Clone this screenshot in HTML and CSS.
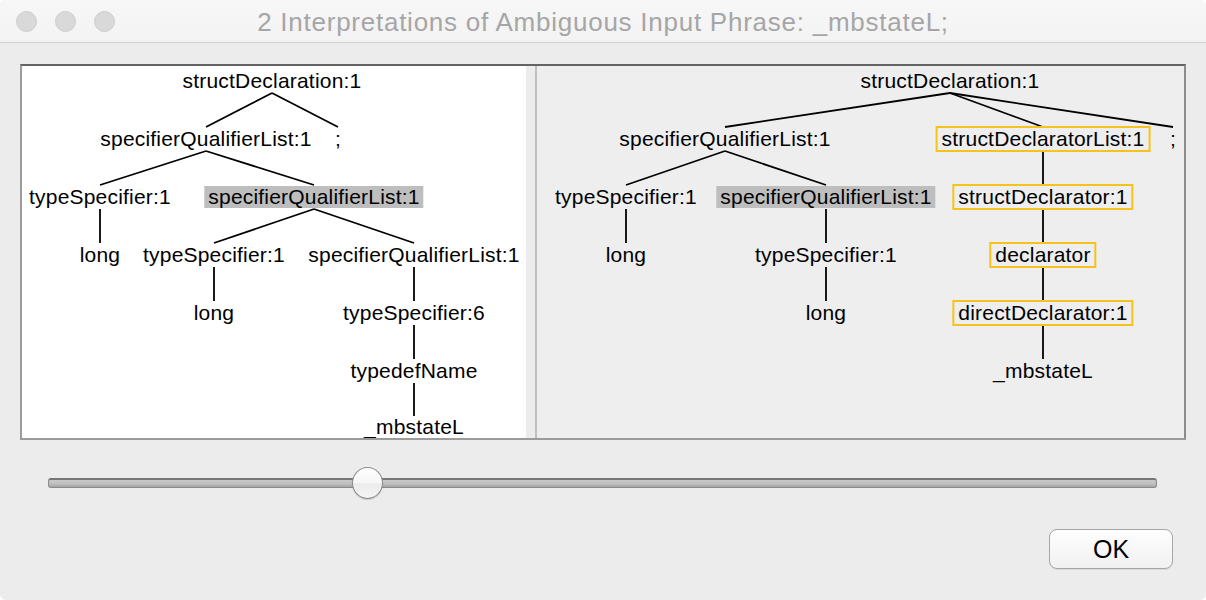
FILE: index.html
```html
<!DOCTYPE html>
<html lang="en">
<head>
    <meta charset="UTF-8">
    <title>2 Interpretations of Ambiguous Input Phrase</title>
    <link rel="stylesheet" href="styles.css">
</head>
<body>
    <div class="window">
        <div class="titlebar">
            <div class="lights">
                <span class="light"></span>
                <span class="light"></span>
                <span class="light"></span>
            </div>
            <div class="title">2 Interpretations of Ambiguous Input Phrase: _mbstateL;</div>
            <div></div>
        </div>

        <div class="content">
            <div class="panel">
                <!-- first interpretation -->
                <div class="tree tree-left">
                    <svg class="edges" viewBox="0 0 504 372" width="504" height="372">
                        <line x1="250" y1="27" x2="184" y2="61"/>
                        <line x1="250" y1="27" x2="316" y2="61"/>
                        <line x1="184" y1="85" x2="78" y2="119"/>
                        <line x1="184" y1="85" x2="292" y2="119"/>
                        <line x1="78" y1="143" x2="78" y2="177"/>
                        <line x1="292" y1="143" x2="192" y2="177"/>
                        <line x1="292" y1="143" x2="392" y2="177"/>
                        <line x1="192" y1="201" x2="192" y2="235"/>
                        <line x1="392" y1="201" x2="392" y2="235"/>
                        <line x1="392" y1="259" x2="392" y2="293"/>
                        <line x1="392" y1="317" x2="392" y2="350"/>
                    </svg>
                    <div class="node lv1" style="left:250px">structDeclaration:1</div>
                    <div class="node lv2" style="left:184px">specifierQualifierList:1</div>
                    <div class="node lv2" style="left:316px">;</div>
                    <div class="node lv3" style="left:78px">typeSpecifier:1</div>
                    <div class="node lv3 sel" style="left:292px">specifierQualifierList:1</div>
                    <div class="node lv4" style="left:78px">long</div>
                    <div class="node lv4" style="left:192px">typeSpecifier:1</div>
                    <div class="node lv4" style="left:392px">specifierQualifierList:1</div>
                    <div class="node lv5" style="left:192px">long</div>
                    <div class="node lv5" style="left:392px">typeSpecifier:6</div>
                    <div class="node lv6" style="left:392px">typedefName</div>
                    <div class="node lv7" style="left:392px">_mbstateL</div>
                </div>

                <div class="divider"></div>

                <!-- second interpretation -->
                <div class="tree tree-right">
                    <svg class="edges" viewBox="0 0 647 372" width="647" height="372">
                        <line x1="413" y1="27" x2="188" y2="61"/>
                        <line x1="413" y1="27" x2="506" y2="61"/>
                        <line x1="413" y1="27" x2="636" y2="61"/>
                        <line x1="188" y1="85" x2="89" y2="119"/>
                        <line x1="188" y1="85" x2="289" y2="119"/>
                        <line x1="506" y1="85" x2="506" y2="119"/>
                        <line x1="89" y1="143" x2="89" y2="177"/>
                        <line x1="289" y1="143" x2="289" y2="177"/>
                        <line x1="506" y1="143" x2="506" y2="177"/>
                        <line x1="289" y1="201" x2="289" y2="235"/>
                        <line x1="506" y1="201" x2="506" y2="235"/>
                        <line x1="506" y1="259" x2="506" y2="293"/>
                    </svg>
                    <div class="node lv1" style="left:413px">structDeclaration:1</div>
                    <div class="node lv2" style="left:188px">specifierQualifierList:1</div>
                    <div class="node lv2 mark" style="left:506px">structDeclaratorList:1</div>
                    <div class="node lv2" style="left:636px">;</div>
                    <div class="node lv3" style="left:89px">typeSpecifier:1</div>
                    <div class="node lv3 sel" style="left:289px">specifierQualifierList:1</div>
                    <div class="node lv3 mark" style="left:506px">structDeclarator:1</div>
                    <div class="node lv4" style="left:89px">long</div>
                    <div class="node lv4" style="left:289px">typeSpecifier:1</div>
                    <div class="node lv4 mark" style="left:506px">declarator</div>
                    <div class="node lv5" style="left:289px">long</div>
                    <div class="node lv5 mark" style="left:506px">directDeclarator:1</div>
                    <div class="node lv6" style="left:506px">_mbstateL</div>
                </div>
            </div>

            <div class="slider">
                <div class="track"></div>
                <div class="thumb"></div>
            </div>

            <div class="buttons">
                <button class="ok">OK</button>
            </div>
        </div>
    </div>
</body>
</html>
```

FILE: styles.css
```css
body {
    margin: 0;
    background: #ffffff;
    font-family: "Liberation Sans", Arial, sans-serif;
}

.window {
    width: 1206px;
    height: 600px;
    background: #ececec;
    border-radius: 6px;
    overflow: hidden;
    display: flex;
    flex-direction: column;
}

.titlebar {
    height: 42px;
    flex: none;
    display: grid;
    grid-template-columns: 1fr auto 1fr;
    align-items: center;
    background: linear-gradient(#f7f7f7, #f3f3f3);
    border-bottom: 1px solid #d0d0d0;
}

.lights {
    display: flex;
    gap: 18px;
    padding-left: 16px;
}

.light {
    width: 21px;
    height: 21px;
    border-radius: 50%;
    background: #d9d9d9;
    border: 1px solid #cdcdcd;
    box-sizing: border-box;
}

.title {
    font-size: 26px;
    letter-spacing: 0.75px;
    color: #a6a6a6;
    padding-top: 3px;
    white-space: nowrap;
}

.content {
    flex: 1;
    padding: 21px 20px 0;
}

.panel {
    height: 376px;
    box-sizing: border-box;
    display: flex;
    border: 2px solid #9b9b9b;
    border-top-color: #636363;
    border-right-color: #8c8c8c;
}

.tree {
    position: relative;
    overflow: hidden;
    font-size: 21px;
    letter-spacing: 0.2px;
    color: #000;
}

.tree-left {
    width: 504px;
    flex: none;
    background: #ffffff;
}

.divider {
    width: 9px;
    flex: none;
    background: #ececec;
}

.tree-right {
    flex: 1;
    background: #eeeeee;
    border-left: 2px solid #bfbfbf;
}

.edges {
    position: absolute;
    left: 0;
    top: 0;
}

.edges line {
    stroke: #000;
    stroke-width: 1.8;
}

.node {
    position: absolute;
    transform: translateX(-50%);
    line-height: 22px;
    white-space: nowrap;
}

.lv1 { top: 4px; }
.lv2 { top: 62px; }
.lv3 { top: 120px; }
.lv4 { top: 178px; }
.lv5 { top: 236px; }
.lv6 { top: 294px; }
.lv7 { top: 350px; }

.sel {
    background: #bebebe;
    padding: 0 4px;
}

.mark {
    border: 2px solid #f7c31b;
    padding: 0 4px;
    margin-top: -2px;
}

.slider {
    position: relative;
    height: 32px;
    margin: 27px 29px 0 28px;
}

.track {
    position: absolute;
    left: 0;
    right: 0;
    top: 11px;
    height: 10px;
    border-radius: 3px;
    box-sizing: border-box;
    border: 1px solid #8a8a8a;
    border-top: 2px solid #777777;
    background: linear-gradient(#c9c9c9, #bdbdbd 60%, #a4a4a4);
}

.thumb {
    position: absolute;
    left: 304px;
    top: 0;
    width: 31px;
    height: 32px;
    box-sizing: border-box;
    border-radius: 50%;
    border: 1px solid #8d8d8d;
    background: linear-gradient(#ffffff, #f6f6f6 50%, #ececec 52%, #f4f4f4);
    box-shadow: 0 1px 1px rgba(0, 0, 0, 0.15);
}

.buttons {
    display: flex;
    justify-content: flex-end;
    padding-right: 13px;
    margin-top: 30px;
}

.ok {
    width: 124px;
    height: 40px;
    border: 1px solid #a6a6a6;
    border-radius: 8px;
    background: linear-gradient(#fefefe, #f1f1f1);
    font-family: "Liberation Sans", Arial, sans-serif;
    font-size: 25px;
    color: #000;
    padding: 0;
    box-shadow: 0 1px 0 rgba(0, 0, 0, 0.08);
}
```
